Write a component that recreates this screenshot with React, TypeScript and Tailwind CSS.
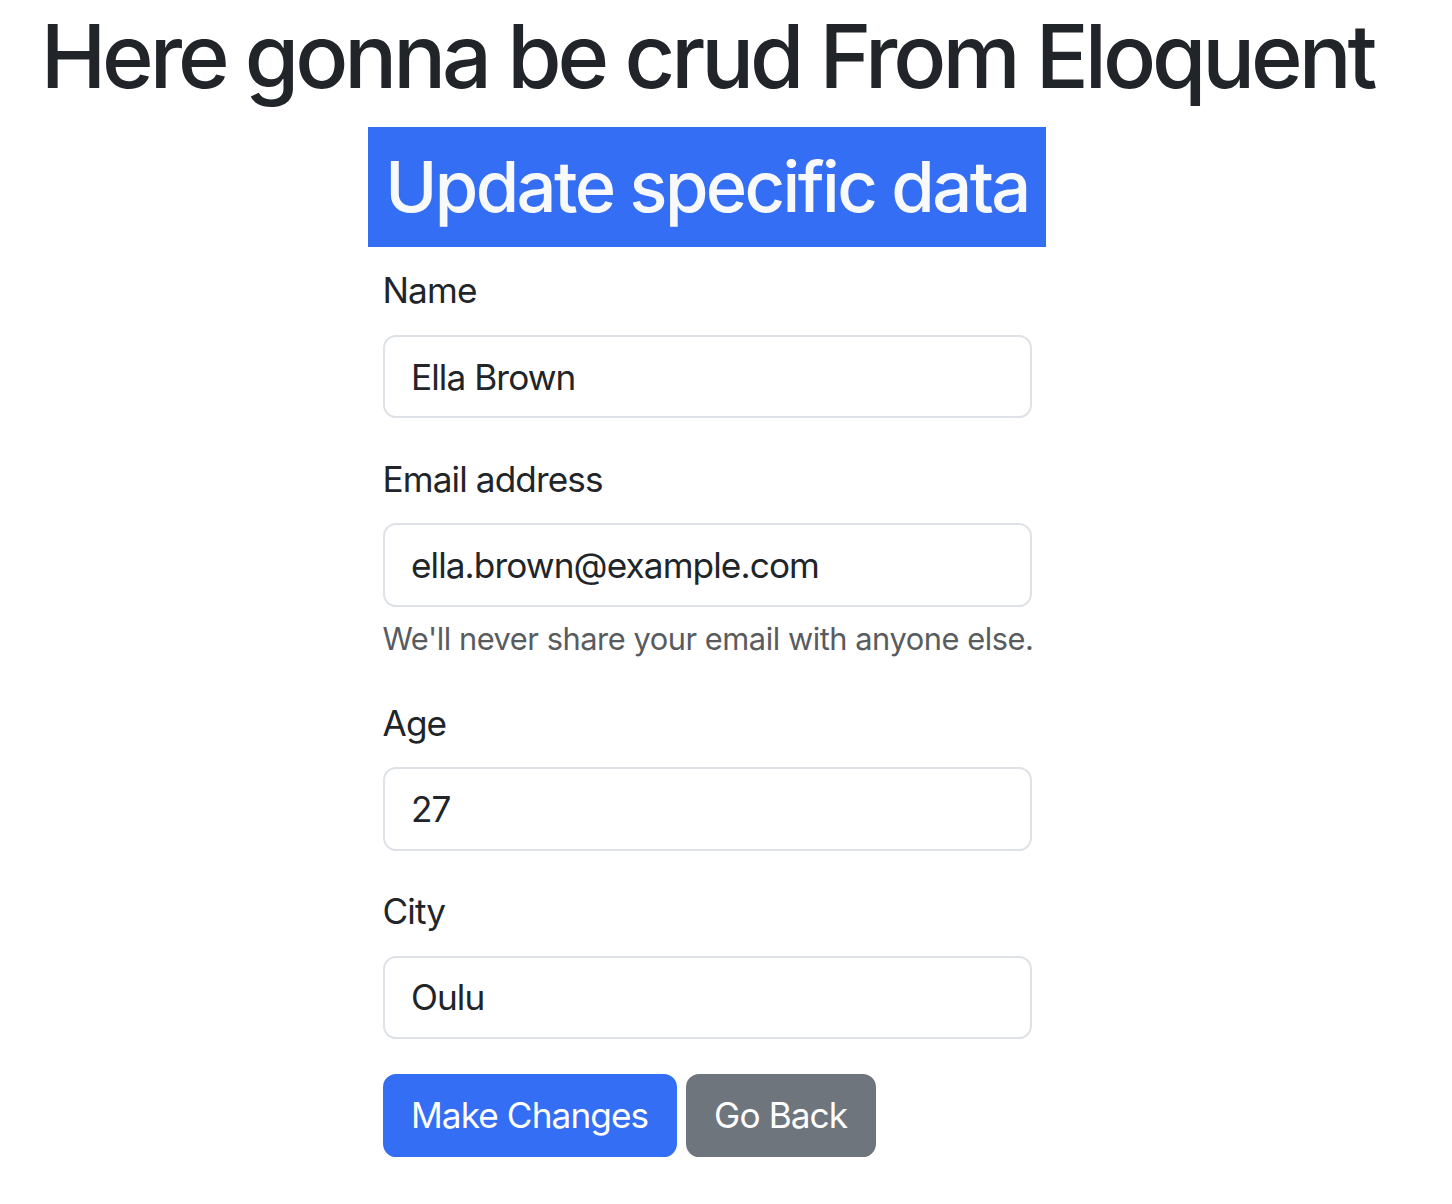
import React from "react";

const font = { fontFamily: "Inter, 'Liberation Sans', sans-serif" };

function Field({ label, value, help }: { label: string; value: string; help?: string }) {
  return (
    <div className="mb-[34.6px]">
      <label className="block mb-[17.6px] text-[35.2px] leading-[52.8px] text-[#212529] tracking-[-0.9px]">{label}</label>
      <input
        readOnly
        value={value}
        className="block w-full h-[83.6px] px-[26.4px] border-[2.2px] border-[#dee2e6] rounded-[13.2px] text-[35.2px] leading-[52.8px] text-[#212529] bg-white outline-none tracking-[-0.9px]"
        style={font}
      />
      {help && (
        <div className="mt-[8.8px] text-[30.8px] leading-[46.2px] text-[#595c5f] whitespace-nowrap tracking-[-0.45px]">{help}</div>
      )}
    </div>
  );
}

export default function App() {
  return (
    <div className="w-[1414px] bg-white pt-[4px]" style={font}>
      <div className="flex flex-col items-center">
        <h1 className="text-[88px] leading-[105.6px] font-medium text-[#212529] mb-[17.6px] tracking-[-4.1px] whitespace-nowrap">
          Here gonna be crud From Eloquent
        </h1>
        <h2 className="inline-block bg-[#336ef5] text-[#f8f9fa] text-[70.4px] leading-[84.5px] font-medium p-[17.6px] mb-[17.6px] tracking-[-2.6px] whitespace-nowrap">
          Update specific data
        </h2>
        <form className="w-[649px]">
          <Field label="Name" value="Ella Brown" />
          <Field label="Email address" value="ella.brown@example.com" help="We'll never share your email with anyone else." />
          <Field label="Age" value="27" />
          <Field label="City" value="Oulu" />
          <div className="flex gap-[9px]">
            <button
              type="button"
              className="h-[83.6px] px-[26.4px] border-[2.2px] border-[#336ef5] bg-[#336ef5] text-white rounded-[13.2px] text-[35.2px] leading-[52.8px] tracking-[-0.9px]"
            >
              Make Changes
            </button>
            <button
              type="button"
              className="h-[83.6px] px-[26.4px] border-[2.2px] border-[#6f757d] bg-[#6f757d] text-white rounded-[13.2px] text-[35.2px] leading-[52.8px] tracking-[-0.9px]"
            >
              Go Back
            </button>
          </div>
        </form>
      </div>
    </div>
  );
}
